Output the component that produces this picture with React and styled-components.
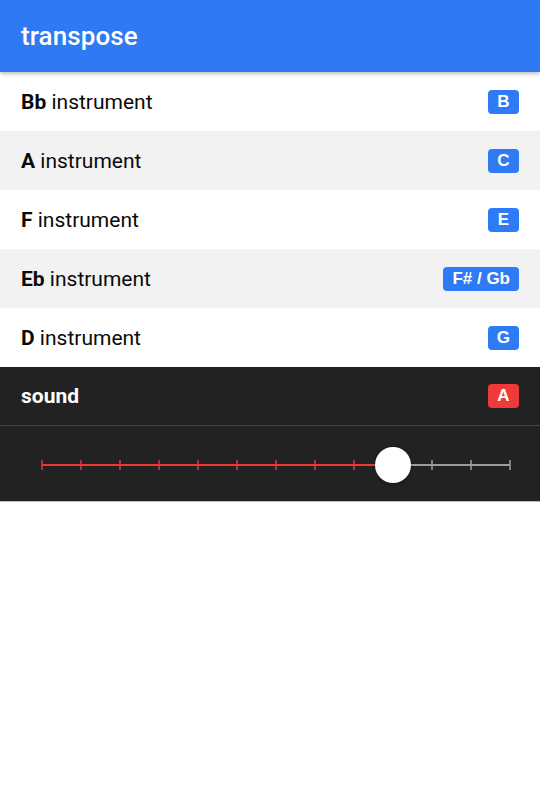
import React from "react";
import styled, { createGlobalStyle } from "styled-components";

const Global = createGlobalStyle`
  html, body { margin: 0; padding: 0; background: #fff; }
  body { font-family: Roboto, "Noto Sans", sans-serif; }
  * { box-sizing: border-box; }
`;

const Page = styled.div`
  width: 540px;
  display: flex;
  flex-direction: column;
`;

const Header = styled.header`
  height: 72px;
  background: #3079f5;
  display: flex;
  align-items: center;
  padding: 0 21px;
  box-shadow: 0 2px 4px rgba(0, 0, 0, 0.25);
  position: relative;
  z-index: 1;
`;

const Title = styled.h1`
  margin: 0;
  color: #fff;
  font-family: Roboto, sans-serif;
  font-weight: 500;
  font-size: 26px;
  letter-spacing: 0.1px;
`;

const Row = styled.div`
  height: 59px;
  display: flex;
  align-items: center;
  justify-content: space-between;
  padding: 0 21px;
  background: ${(p) => (p.$dark ? "#222222" : p.$alt ? "#f2f2f2" : "#ffffff")};
  color: ${(p) => (p.$dark ? "#ffffff" : "#0a0a0a")};
  font-size: 21px;
  font-family: Roboto, sans-serif;
  ${(p) => (p.$dark ? "border-bottom: 1px solid #444;" : "")}
`;

const Label = styled.span`
  font-weight: 400;
  b { font-weight: 700; }
`;

const Badge = styled.span`
  min-width: 31px;
  height: 24px;
  padding: 0 9px;
  border-radius: 4px;
  background: ${(p) => (p.$red ? "#f03a3a" : "#2f7bf5")};
  color: #fff;
  font-family: "Liberation Sans", Arial, sans-serif;
  font-weight: 700;
  font-size: 17px;
  display: inline-flex;
  align-items: center;
  justify-content: center;
`;

const SliderPanel = styled.div`
  height: 76px;
  background: #222222;
  padding: 0 30px 0 42px;
  display: flex;
  align-items: center;
  border-bottom: 1px solid #bbb;
`;

const Track = styled.div`
  position: relative;
  width: 100%;
  height: 12px;
  margin-top: 2px;
`;

const TrackSvg = styled.svg`
  display: block;
  width: 100%;
  height: 12px;
  overflow: visible;
`;

const Thumb = styled.div`
  position: absolute;
  top: 50%;
  width: 36px;
  height: 36px;
  margin-left: -18px;
  margin-top: -18px;
  border-radius: 50%;
  background: #fff;
  box-shadow: 0 1px 3px rgba(0, 0, 0, 0.5);
`;

const rows = [
  { k: "Bb", note: "B" },
  { k: "A", note: "C" },
  { k: "F", note: "E" },
  { k: "Eb", note: "F# / Gb" },
  { k: "D", note: "G" },
];

const STEPS = 12;
const VALUE = 9;
const W = 468;

export default function App() {
  const pos = (i) => (i / STEPS) * W;
  return (
    <Page>
      <Global />
      <Header>
        <Title>transpose</Title>
      </Header>
      {rows.map((r, i) => (
        <Row key={r.k} $alt={i % 2 === 1}>
          <Label>
            <b>{r.k}</b> instrument
          </Label>
          <Badge>{r.note}</Badge>
        </Row>
      ))}
      <Row $dark>
        <Label>
          <b>sound</b>
        </Label>
        <Badge $red>A</Badge>
      </Row>
      <SliderPanel>
        <Track>
          <TrackSvg viewBox={`0 0 ${W} 12`} preserveAspectRatio="none">
            <line x1="0" y1="6" x2={pos(VALUE)} y2="6" stroke="#e53935" strokeWidth="2" />
            <line x1={pos(VALUE)} y1="6" x2={W} y2="6" stroke="#9e9e9e" strokeWidth="2" />
            {Array.from({ length: STEPS + 1 }, (_, i) => (
              <line
                key={i}
                x1={pos(i)}
                y1="1"
                x2={pos(i)}
                y2="11"
                stroke={i <= VALUE ? "#e53935" : "#9e9e9e"}
                strokeWidth="1.5"
              />
            ))}
          </TrackSvg>
          <Thumb style={{ left: `${(VALUE / STEPS) * 100}%` }} />
        </Track>
      </SliderPanel>
    </Page>
  );
}
